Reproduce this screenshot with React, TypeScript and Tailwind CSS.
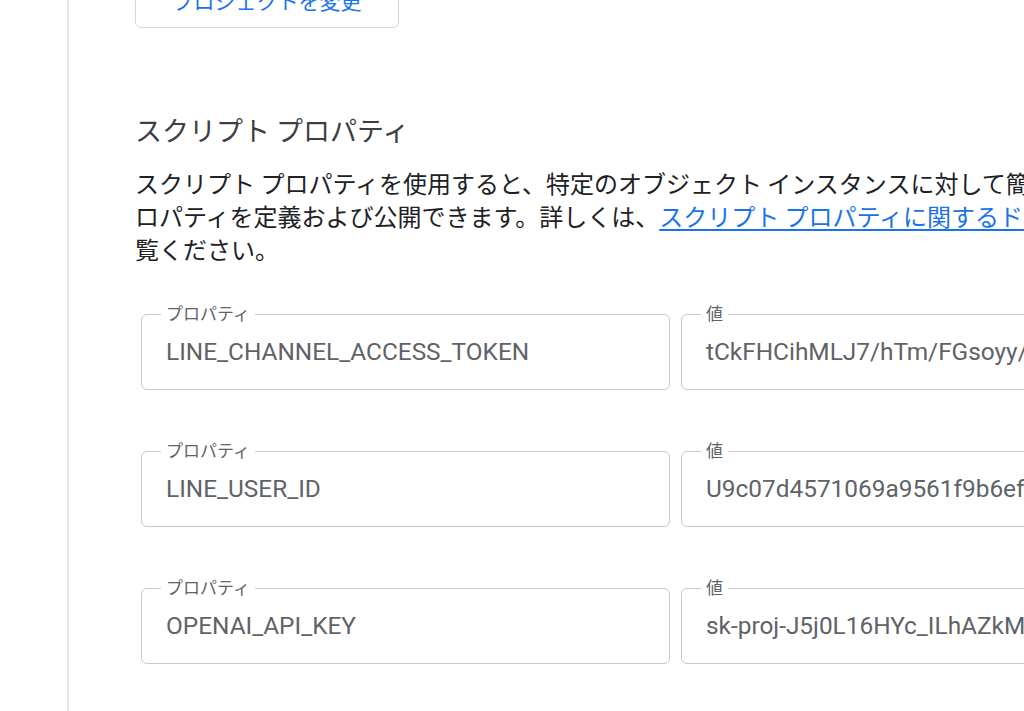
import React from 'react';

type Prop = {
  name: string;
  value: string;
};

const properties: Prop[] = [
  { name: 'LINE_CHANNEL_ACCESS_TOKEN', value: 'tCkFHCihMLJ7/hTm/FGsoyy/x8kQn2pLw0Vb3mZ' },
  { name: 'LINE_USER_ID', value: 'U9c07d4571069a9561f9b6ef3a1c2d4e5' },
  { name: 'OPENAI_API_KEY', value: 'sk-proj-J5j0L16HYc_ILhAZkMq8rT2vWx' },
];

const jp = '"Noto Sans CJK JP", "Noto Sans", sans-serif';

function OutlinedField({ label, value }: { label: string; value: string }) {
  return (
    <div className="relative h-[76px] w-[529px] shrink-0 rounded-[6px] border border-[#c9c9c9] bg-white">
      {/* notched label */}
      <span
        className="absolute left-[19px] top-[-12px] bg-white px-[5px] text-[17px] leading-[20px] text-[#5f6368]"
        style={{ fontFamily: jp }}
      >
        {label}
      </span>
      <div
        className="flex h-full items-center whitespace-nowrap pl-[24px] text-[24.4px] text-[#5f6368]"
        style={{ fontFamily: 'Roboto, "Noto Sans", sans-serif' }}
      >
        {value}
      </div>
    </div>
  );
}

export default function App() {
  return (
    <div className="flex h-[711px] w-[1024px] overflow-hidden bg-white">
      {/* side rail */}
      <div className="w-[69px] shrink-0 border-r-2 border-[#e6e6e6]" />

      <main className="min-w-0 flex-1 pl-[66px]">
        {/* change project button (scrolled mostly out of view) */}
        <button
          type="button"
          className="mt-[-26px] flex h-[54px] w-[264px] items-center justify-center rounded-[6px] border border-[#d6d6d6] text-[21px] text-[#1a73e8]"
          style={{ fontFamily: jp }}
        >
          プロジェクトを変更
        </button>

        {/* Script properties */}
        <h2
          className="mt-[86px] text-[27px] leading-[32px] text-[#3c4043]"
          style={{ fontFamily: jp }}
        >
          スクリプト プロパティ
        </h2>

        <p
          className="mt-[20px] whitespace-nowrap text-[24px] leading-[33px] text-[#202124]"
          style={{ fontFamily: jp }}
        >
          スクリプト プロパティを使用すると、特定のオブジェクト インスタンスに対して簡単にアクセスできるプ
          <br />
          ロパティを定義および公開できます。詳しくは、
          <a href="#" className="text-[#1a73e8] underline underline-offset-[3px]">
            スクリプト プロパティに関するドキュメント
          </a>
          をご
          <br />
          覧ください。
        </p>

        <div className="mt-[49px] flex flex-col gap-[61px] pl-[6px]">
          {properties.map((p) => (
            <div key={p.name} className="flex gap-[11px]">
              <OutlinedField label="プロパティ" value={p.name} />
              <OutlinedField label="値" value={p.value} />
            </div>
          ))}
        </div>
      </main>
    </div>
  );
}
